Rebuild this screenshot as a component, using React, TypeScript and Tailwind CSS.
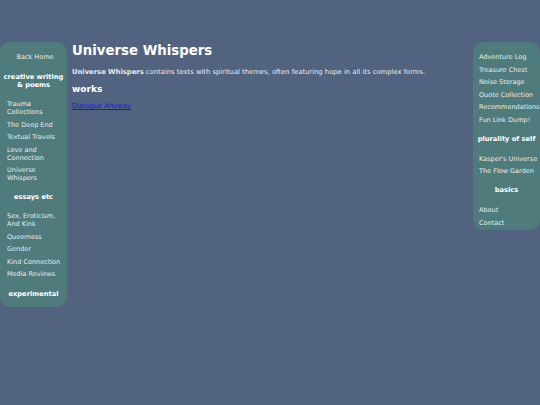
export default function App() {
  const item = "block text-[6.5px] leading-[8px] text-[#e6ecec] whitespace-normal";
  const head = "text-[6.7px] leading-[8px] font-bold text-white text-center";
  return (
    <div
      className="w-[540px] h-[405px] bg-[#52637f] flex items-start justify-between pt-[42px]"
      style={{ fontFamily: '"DejaVu Sans", Verdana, sans-serif' }}
    >
      <aside className="w-[67px] bg-[#4f7b7d] rounded-[10px] pt-[11px] pb-[9px] flex flex-col shrink-0">
        <a className={`${item} text-center pl-[3px]`}>Back Home</a>
        <h3 className={`${head} mt-[12px]`}>creative writing &amp; poems</h3>
        <nav className="flex flex-col gap-[4.5px] pl-[7px] mt-[11px]">
          <a className={item}>Trauma Collections</a>
          <a className={item}>The Deep End</a>
          <a className={item}>Textual Travels</a>
          <a className={item}>Love and Connection</a>
          <a className={item}>Universe Whispers</a>
        </nav>
        <h3 className={`${head} mt-[11px]`}>essays etc</h3>
        <nav className="flex flex-col gap-[4.5px] pl-[7px] mt-[11px]">
          <a className={item}>Sex, Eroticism, And Kink</a>
          <a className={item}>Queerness</a>
          <a className={item}>Gender</a>
          <a className={item}>Kind Connection</a>
          <a className={item}>Media Reviews</a>
        </nav>
        <h3 className={`${head} mt-[12px]`}>experimental</h3>
      </aside>

      <main className="flex-1 pl-[5px] pr-[10px] pt-[1px] text-[#e6eaf0]">
        <h1 className="text-[13.3px] leading-[16px] font-bold text-white">Universe Whispers</h1>
        <p className="text-[6.8px] leading-[9px] mt-[9px]">
          <b>Universe Whispers</b> contains texts with spiritual themes, often featuring hope in all its complex forms.
        </p>
        <h2 className="text-[9px] leading-[11px] font-bold text-white mt-[7px]">works</h2>
        <a className="block text-[6.8px] leading-[9px] text-[#1a1ad0] underline mt-[7px]">Dialogue Anyway</a>
      </main>

      <aside className="w-[67px] bg-[#4f7b7d] rounded-[10px] pt-[11px] pb-[3px] flex flex-col shrink-0">
        <nav className="flex flex-col gap-[4.5px] pl-[6px]">
          <a className={item}>Adventure Log</a>
          <a className={item}>Treasure Chest</a>
          <a className={item}>Noise Storage</a>
          <a className={item}>Quote Collection</a>
          <a className={item}>Recommendations</a>
          <a className={item}>Fun Link Dump!</a>
        </nav>
        <h3 className={`${head} mt-[11px]`}>plurality of self</h3>
        <nav className="flex flex-col gap-[4.5px] pl-[6px] mt-[12px]">
          <a className={item}>Kasper's Universe</a>
          <a className={item}>The Flow Garden</a>
        </nav>
        <h3 className={`${head} mt-[11px]`}>basics</h3>
        <nav className="flex flex-col gap-[4.5px] pl-[6px] mt-[12px]">
          <a className={item}>About</a>
          <a className={item}>Contact</a>
        </nav>
      </aside>
    </div>
  );
}
